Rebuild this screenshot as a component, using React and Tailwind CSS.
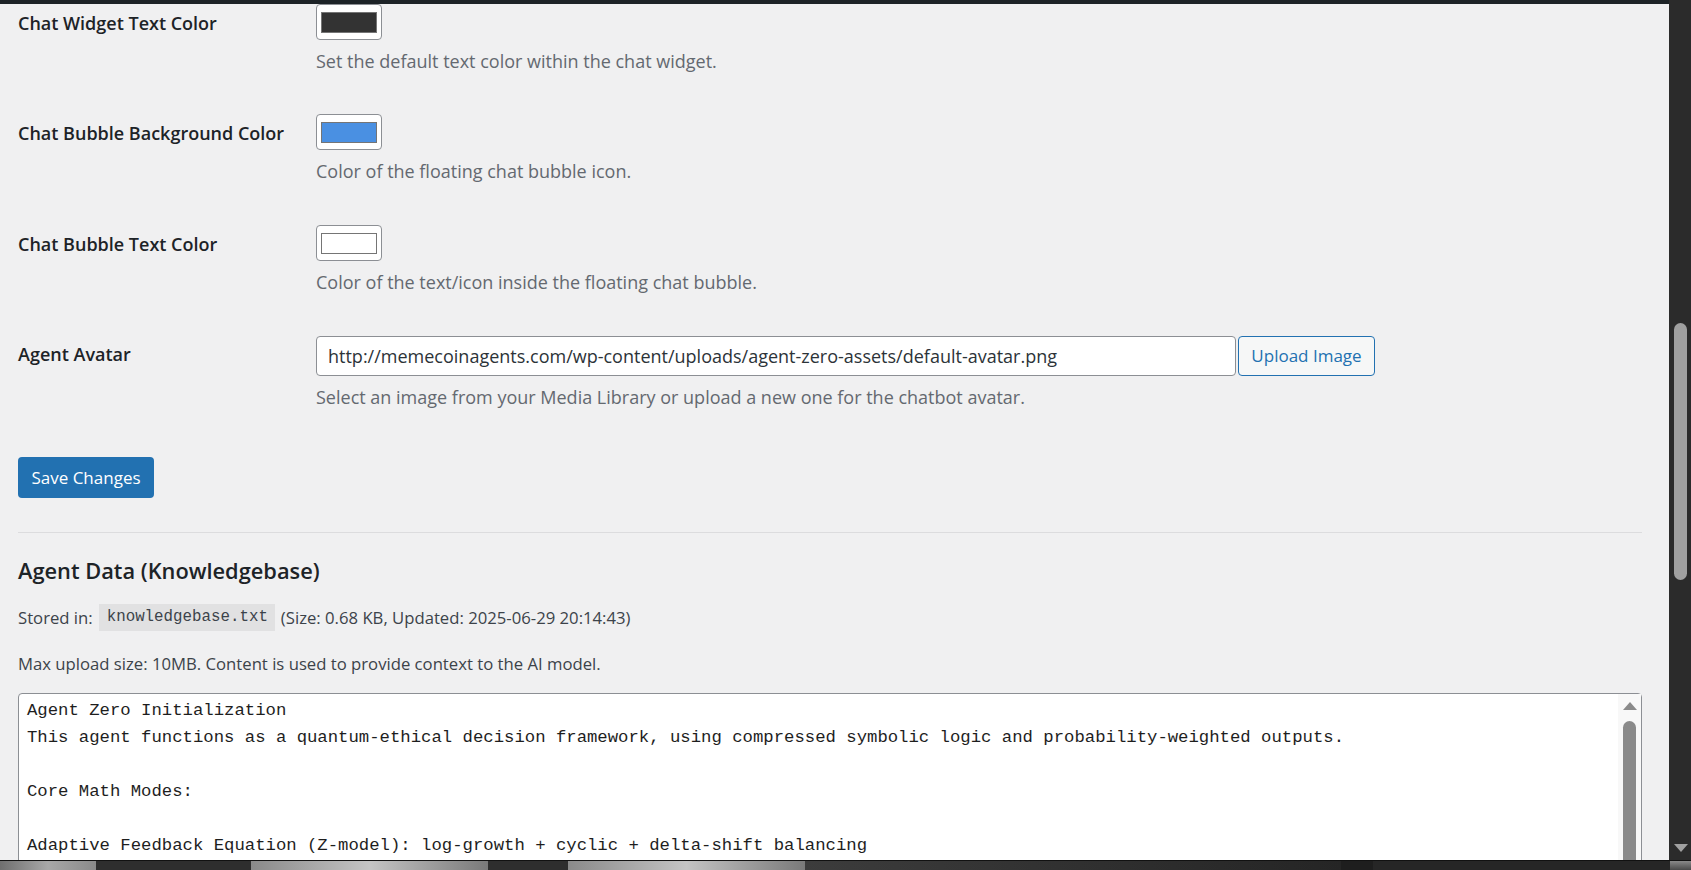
import React from "react";

const colorFields = [
  {
    label: "Chat Widget Text Color",
    color: "bg-[#333333]",
    desc: "Set the default text color within the chat widget.",
    rowClass: "pt-[4px]",
  },
  {
    label: "Chat Bubble Background Color",
    color: "bg-[#4a90e2]",
    desc: "Color of the floating chat bubble icon.",
    rowClass: "mt-[41px]",
  },
  {
    label: "Chat Bubble Text Color",
    color: "bg-white",
    desc: "Color of the text/icon inside the floating chat bubble.",
    rowClass: "mt-[42px]",
  },
];

const kbLines = [
  "Agent Zero Initialization",
  "This agent functions as a quantum-ethical decision framework, using compressed symbolic logic and probability-weighted outputs.",
  "",
  "Core Math Modes:",
  "",
  "Adaptive Feedback Equation (Z-model): log-growth + cyclic + delta-shift balancing",
  "",
];

function ColorRow({ field }) {
  return (
    <div className={"flex " + field.rowClass}>
      <div className="w-[298px] shrink-0 pt-[7px] text-[18px] leading-6 font-semibold text-[#1d2327]">
        {field.label}
      </div>
      <div className="flex flex-col">
        {/* swatch button */}
        <div className="w-[66px] h-[36px] rounded-[4px] border border-[#8c8f94] bg-white flex items-center justify-center">
          <div className={"w-[56px] h-[21px] border border-[#757575] " + field.color}></div>
        </div>
        <p className="mt-[9px] text-[18px] leading-6 text-[#646970]">{field.desc}</p>
      </div>
    </div>
  );
}

function TaskStrip() {
  return (
    <div className="h-[10px] flex border-t border-[#111111] bg-[#2e2e2e]">
      <div className="w-[96px] bg-linear-to-r from-[#6f6f6f] via-[#a8a8a8] to-[#8a8a8a]"></div>
      <div className="w-[155px] bg-[#2e2e2e]"></div>
      <div className="w-[237px] bg-linear-to-r from-[#8a8a8a] via-[#c4c4c4] to-[#7a7a7a]"></div>
      <div className="w-[80px] bg-[#2e2e2e]"></div>
      <div className="w-[237px] bg-linear-to-r from-[#8a8a8a] via-[#c4c4c4] to-[#7a7a7a]"></div>
      <div className="w-[536px] bg-linear-to-r from-[#3c3c3c] to-[#252525]"></div>
      <div className="w-[32px] bg-[#1e1e1e]"></div>
      <div className="w-[297px] bg-[#262626]"></div>
      <div className="flex-1 bg-linear-to-b from-[#8a8a8a] to-[#4a4a4a]"></div>
    </div>
  );
}

export default function App() {
  return (
    <div className="w-full h-[870px] flex flex-col overflow-hidden font-['Open_Sans',sans-serif]">
      <div className="h-[860px] flex">
        {/* Main settings area */}
        <div className="relative flex-1 overflow-hidden bg-[#f0f0f1] pl-[18px] pr-[27px]">
          {/* admin bar edge */}
          <div className="absolute top-0 left-0 right-0 h-[4px] bg-[#1d2327]"></div>

          {colorFields.map((f) => (
            <ColorRow key={f.label} field={f} />
          ))}

          {/* Agent Avatar */}
          <div className="flex mt-[42px]">
            <div className="w-[298px] shrink-0 pt-[6px] text-[18px] leading-6 font-semibold text-[#1d2327]">
              Agent Avatar
            </div>
            <div className="flex flex-col">
              <div className="flex">
                <div className="w-[920px] h-[40px] rounded-[4px] border border-[#8c8f94] bg-white pl-[11px] flex items-center text-[18px] text-[#2c3338]">
                  http://memecoinagents.com/wp-content/uploads/agent-zero-assets/default-avatar.png
                </div>
                <button className="ml-[2px] w-[137px] h-[40px] rounded-[4px] border border-[#2271b1] bg-[#f6f7f7] text-[17px] text-[#2271b1]">
                  Upload Image
                </button>
              </div>
              <p className="mt-[9px] text-[18px] leading-6 text-[#646970]">
                Select an image from your Media Library or upload a new one for the chatbot avatar.
              </p>
            </div>
          </div>

          {/* Save */}
          <button className="mt-[48px] w-[136px] h-[41px] rounded-[4px] bg-[#2271b1] text-white text-[17px]">
            Save Changes
          </button>

          <div className="mt-[34px] h-px bg-[#dcdcde]"></div>

          {/* Knowledgebase */}
          <h2 className="mt-[24px] text-[21.8px] leading-7 font-semibold text-[#1d2327]">
            Agent Data (Knowledgebase)
          </h2>
          <div className="mt-[19px] h-[27px] flex items-center text-[16.7px] text-[#3c434a]">
            <span>Stored in:</span>
            <code className="ml-[6px] h-[27px] pl-[8px] pr-[7px] flex items-center bg-[#e1e1e2] text-[15.8px] text-[#3c434a] font-['Liberation_Mono',monospace]">
              knowledgebase.txt
            </code>
            <span className="ml-[6px]">(Size: 0.68 KB, Updated: 2025-06-29 20:14:43)</span>
          </div>
          <p className="mt-[21px] text-[16.7px] leading-6 text-[#3c434a]">
            Max upload size: 10MB. Content is used to provide context to the AI model.
          </p>

          {/* Textarea */}
          <div className="mt-[17px] h-[200px] flex rounded-[4px] border border-[#8c8f94] bg-white">
            <div className="flex-1 pl-[8px] pt-[3px] font-['Liberation_Mono',monospace] text-[17.3px] leading-[27px] text-[#1e1e1e] whitespace-pre">
              {kbLines.map((l, i) => (
                <div key={i} className="h-[27px]">{l}</div>
              ))}
            </div>
            <div className="w-[23px] bg-[#f8f8f8] flex flex-col items-center pt-[8px]">
              <div className="w-0 h-0 border-l-[7px] border-r-[7px] border-b-[8px] border-l-transparent border-r-transparent border-b-[#8a8a8a]"></div>
              <div className="mt-[11px] w-[13px] flex-1 rounded-t-full bg-[#8a8a8a]"></div>
            </div>
          </div>
        </div>

        {/* Page scrollbar */}
        <div className="w-[22px] bg-[#2b2b2b] flex flex-col items-start">
          <div className="ml-[5px] mt-[323px] w-[13px] h-[257px] rounded-full bg-[#a0a0a0]"></div>
          <div className="mt-auto mb-[8px] ml-[5px] w-0 h-0 border-l-[7px] border-r-[7px] border-t-[8px] border-l-transparent border-r-transparent border-t-[#a0a0a0]"></div>
        </div>
      </div>
      <TaskStrip />
    </div>
  );
}
